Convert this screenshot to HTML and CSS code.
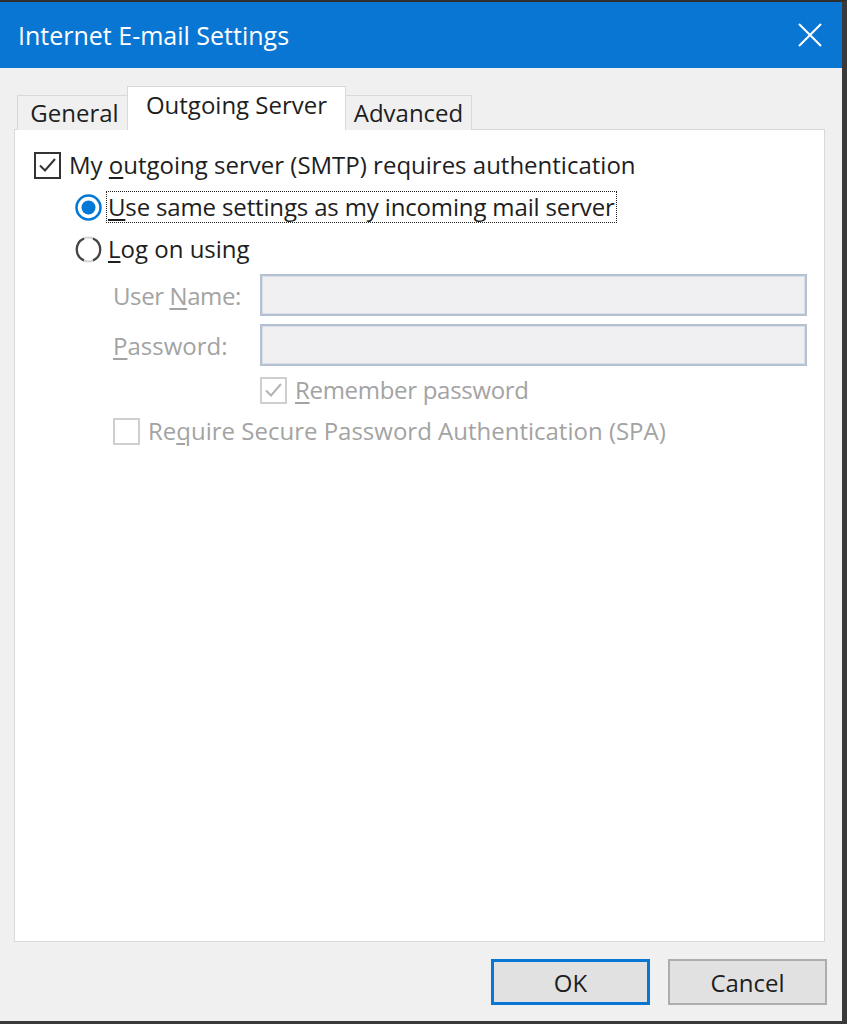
FILE: index.html
```html
<!DOCTYPE html>
<html>
<head>
<meta charset="utf-8">
<title>Internet E-mail Settings</title>
<link rel="stylesheet" href="styles.css">
</head>
<body>
<div class="window">
  <div class="titlebar">
    <span class="title">Internet E-mail Settings</span>
    <svg class="close" width="24" height="24" viewBox="0 0 24 24"><path d="M1 1L23 23M23 1L1 23" stroke="#ffffff" stroke-width="2" fill="none"/></svg>
  </div>
  <div class="client">
    <div class="tabs">
      <div class="tab">General</div>
      <div class="tab active">Outgoing Server</div>
      <div class="tab">Advanced</div>
    </div>
    <div class="panel">
      <div class="row r1">
        <span class="chk"><svg width="23" height="23" viewBox="0 0 23 23"><path d="M4 11.5L9 16.5L19 5" stroke="#333" stroke-width="2" fill="none"/></svg></span>
        <span class="lbl">My <u>o</u>utgoing server (SMTP) requires authentication</span>
      </div>
      <div class="row r2">
        <svg class="radio" width="27" height="27" viewBox="0 0 27 27"><circle cx="13.5" cy="13.5" r="12" stroke="#0078d7" stroke-width="2.5" fill="#fff"/><circle cx="13.5" cy="13.5" r="7" fill="#0078d7"/></svg>
        <span class="lbl focus tight"><u>U</u>se same settings as my incoming mail server</span>
      </div>
      <div class="row r3">
        <svg class="radio" width="27" height="27" viewBox="0 0 27 27"><circle cx="13.5" cy="13.5" r="12" stroke="#d4d4d4" stroke-width="2" fill="#fff"/><path d="M9 2.5A12 12 0 0 0 9 24.5M18 2.5A12 12 0 0 1 18 24.5" stroke="#444" stroke-width="2.2" fill="none"/></svg>
        <span class="lbl nofocus"><u>L</u>og on using</span>
      </div>
      <div class="row field r4">
        <span class="flabel tight"><span>User <u>N</u>ame:</span></span>
        <span class="input"></span>
      </div>
      <div class="row field r5">
        <span class="flabel"><u>P</u>assword:</span>
        <span class="input"></span>
      </div>
      <div class="row r6">
        <span class="chk dis"><svg width="23" height="23" viewBox="0 0 23 23"><path d="M4 11.5L9 16.5L19 5" stroke="#b4b4b4" stroke-width="2" fill="none"/></svg></span>
        <span class="lbl disabled tighter"><u>R</u>emember password</span>
      </div>
      <div class="row r7">
        <span class="chk dis"></span>
        <span class="lbl disabled">Re<u>q</u>uire Secure Password Authentication (SPA)</span>
      </div>
    </div>
    <div class="footer">
      <button class="btn default">OK</button>
      <button class="btn">Cancel</button>
    </div>
  </div>
</div>
</body>
</html>
```

FILE: styles.css
```css
* { box-sizing: border-box; }
html, body { margin: 0; padding: 0; }
body {
  background: #f0f0f0;
  font-family: "Open Sans", "Noto Sans", "Liberation Sans", sans-serif;
  font-size: 24px;
  font-stretch: 90%;
  color: #1e1e1e;
}
.window {
  width: 847px;
  height: 1024px;
  border-top: 2px solid #2e2e2e;
  border-right: 5px solid #3a3a3a;
  border-bottom: 3px solid #3a3a3a;
  display: flex;
  flex-direction: column;
}
.titlebar {
  height: 66px;
  background: #0a76d4;
  display: flex;
  align-items: center;
  justify-content: space-between;
  padding: 0 20px 0 18px;
}
.title {
  color: #ffffff;
  font-size: 25px;
  margin-top: -1px;
}
.close { display: block; margin-top: -1px; }
.client {
  flex: 1;
  background: #f0f0f0;
  display: flex;
  flex-direction: column;
}
.tabs {
  display: flex;
  align-items: flex-end;
  margin: 18px 0 -1px 17px;
  height: 44px;
  position: relative;
  z-index: 1;
}
.tab {
  height: 35px;
  border: 1px solid #d9d9d9;
  border-bottom: none;
  background: #f0f0f0;
  display: flex;
  align-items: center;
  justify-content: center;
  padding-bottom: 2px;
}
.tab:nth-child(1) { width: 110px; border-right: none; padding-left: 4px; }
.tab:nth-child(3) { width: 126px; border-left: none; }
.tab.active {
  width: 219px;
  height: 44px;
  background: #ffffff;
  padding-bottom: 8px;
}
.panel {
  margin-left: 14px;
  width: 811px;
  height: 813px;
  background: #ffffff;
  border: 1px solid #d9d9d9;
  padding-top: 18px;
}
.row {
  display: flex;
  align-items: center;
  height: 34px;
}
.r1 { margin-left: 19px; }
.r2, .r3 { margin-top: 8px; margin-left: 60px; }
.field { height: 42px; margin-top: 8px; margin-left: 98px; }
.r6 { margin-top: 7px; margin-left: 245px; }
.r7 { margin-top: 7px; margin-left: 98px; }
.chk {
  width: 27px;
  height: 27px;
  border: 2px solid #333333;
  background: #fff;
  display: block;
  flex: none;
  margin-right: 8px;
}
.chk svg { display: block; }
.chk.dis { border-color: #cfcfcf; }
.radio { display: block; flex: none; margin-right: 4px; }
.lbl { white-space: nowrap; line-height: 30px; }
.tight { letter-spacing: -0.15px; }
.tighter { letter-spacing: -0.3px; }
.focus { border: 1px dotted #222; padding: 0 1px; }
.nofocus { border: 1px solid transparent; padding: 0 1px; }
.disabled, .flabel { color: #a3a3a3; }
.flabel { width: 147px; flex: none; white-space: nowrap; }
.r4 .flabel { letter-spacing: -0.4px; }
.input {
  width: 547px;
  height: 42px;
  border: 2px solid #b5c0d0;
  box-shadow: inset 0 0 0 1px #d9dfe8;
  background: #f0f0f2;
  display: block;
}
u { text-decoration-thickness: 1.5px; text-underline-offset: 3px; }
.footer {
  display: flex;
  justify-content: flex-end;
  gap: 18px;
  margin-top: 17px;
  padding-right: 15px;
}
.btn {
  width: 159px;
  height: 46px;
  background: #e1e1e1;
  border: 2px solid #adadad;
  font-family: inherit;
  font-size: 24px;
  font-stretch: 90%;
  color: #1e1e1e;
  padding: 0;
}
.btn.default { border: 3px solid #0a76d4; }
```
